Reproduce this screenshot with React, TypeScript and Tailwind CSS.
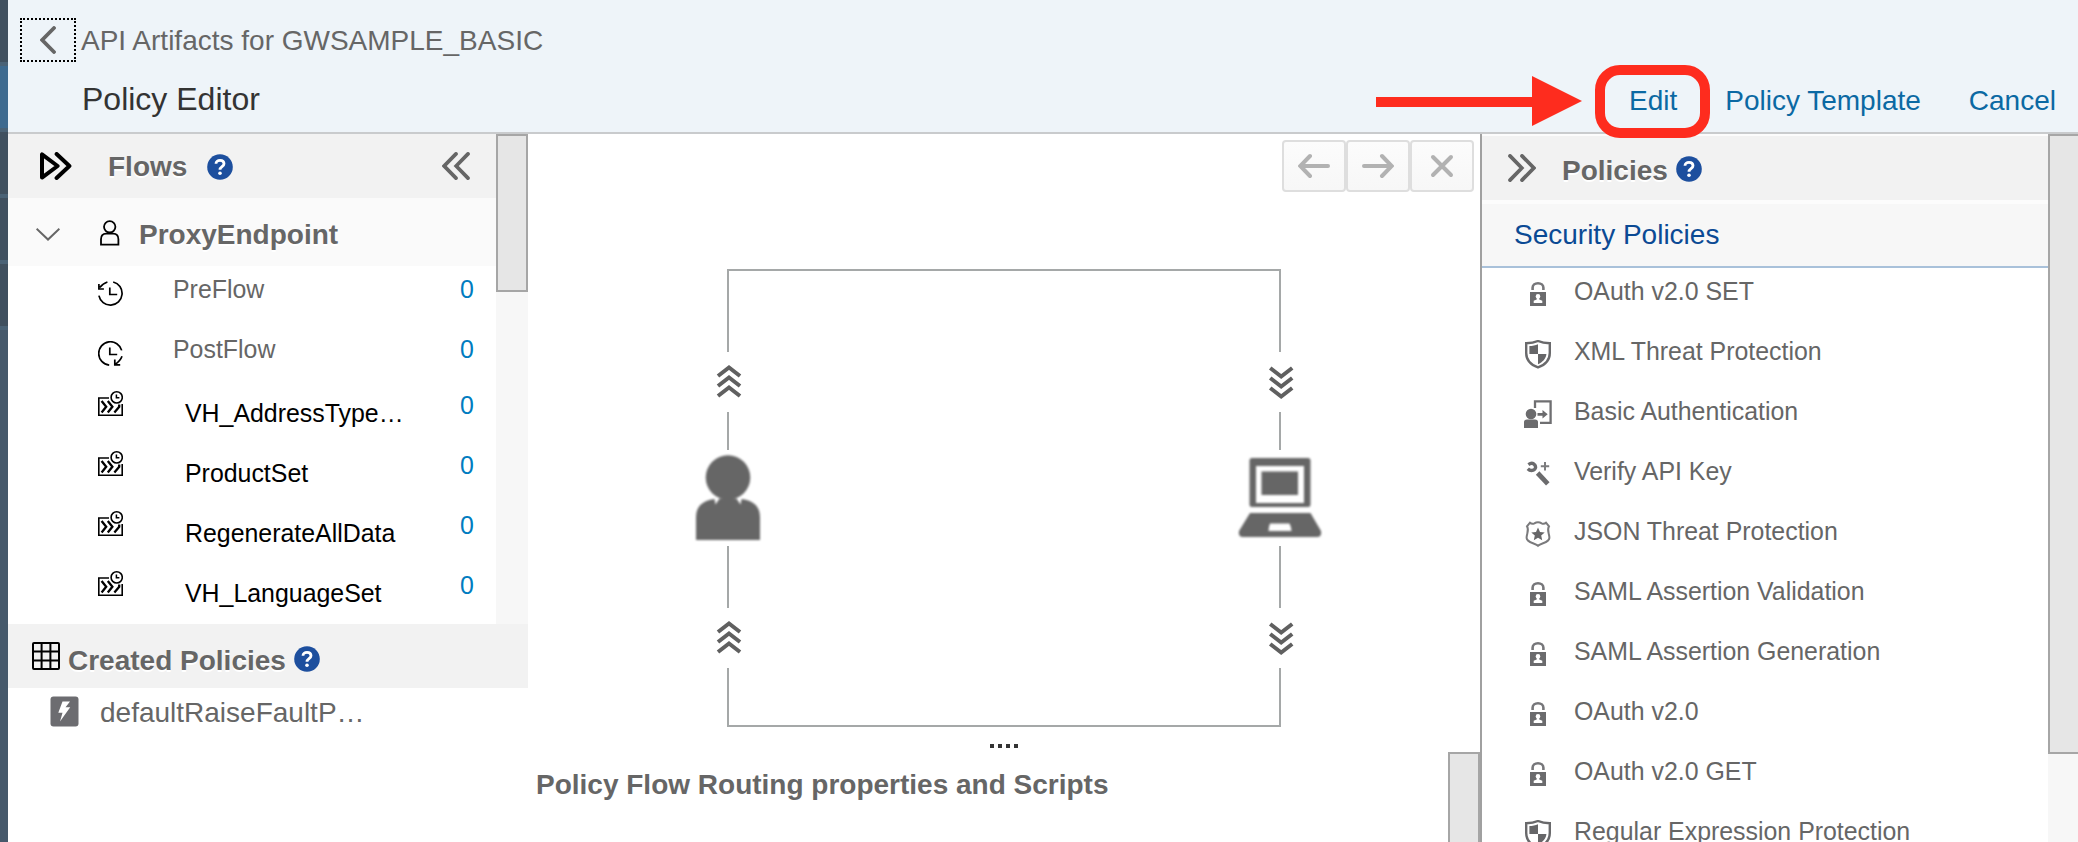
import type { ReactNode } from "react";

function HelpIcon() {
  return (
    <svg width="26" height="26" viewBox="0 0 26 26" fill="none" className="shrink-0">
      <circle cx="13" cy="13" r="12.8" fill="#1d4f9e" />
      <path d="M9 9.8C9 7.6 10.700 6.400 13 6.400s4 1.200 4 3.300c0 2.900-4 3-4 6" stroke="#fff" strokeWidth="2.800" />
      <circle cx="13" cy="19.300" r="1.800" fill="#fff" />
    </svg>
  );
}

function DoubleChevron({ left = false }: { left?: boolean }) {
  return (
    <svg width="28" height="28" viewBox="0 0 28 28" fill="none" stroke="#666" strokeWidth="3.700" strokeLinecap="round" className="shrink-0">
      {left ? (
        <path d="M14 1.900 2.200 14 14 26.100M26 1.900 14.200 14 26 26.100" />
      ) : (
        <path d="M2 1.900 13.800 14 2 26.100M14 1.900 25.800 14 14 26.100" />
      )}
    </svg>
  );
}

function PreFlowIcon() {
  return (
    <svg width="25" height="25" viewBox="0 0 25 25" fill="none" stroke="#000" strokeWidth="1.700">
      <path d="M15.200 1A11.700 11.700 0 1 1 .9 14.600" />
      <path d="M9.400 1Q5 2.300 1.800 6.600M.9 3v5h5M11.800 6.600v6.900h7.400" />
    </svg>
  );
}

function PostFlowIcon() {
  return (
    <svg width="25" height="25" viewBox="0 0 25 25" fill="none" stroke="#000" strokeWidth="1.700">
      <path d="M11.200 24.100A11.700 11.700 0 1 1 23.700 9.400" />
      <path d="M24 15.200q-1.600 4.600-6.800 8M16.800 18.600v5.200h5.400M11.800 6.600v6.900h7.400" />
    </svg>
  );
}

function ConditionalFlowIcon() {
  return (
    <svg width="25" height="25" viewBox="0 0 25 25" fill="none" stroke="#000" strokeWidth="1.600">
      <path d="M11 7H.8v17.200h23.400V13" />
      <circle cx="18.700" cy="6.400" r="5.600" />
      <path d="M18.400 3.400v3.400h3" strokeWidth="1.500" />
      <path d="m3.600 10 4.600 5.800-4.600 5.600M9.800 10l4.600 5.800-4.600 5.600M21.200 13.600v2.200l-4.800 5.600" strokeWidth="2.300" />
    </svg>
  );
}

const FILL = "#6b6b6d";

function LockIcon() {
  return (
    <svg width="28" height="30" viewBox="0 0 28 30" className="blur-[0.5px]">
      <path d="M8.600 10V7.800C8.600 5 10.800 3.200 14 3.200s5.400 1.800 5.400 4.600V10" fill="none" stroke="#77777a" strokeWidth="2.600" />
      <path d="M6 12h16v14H6z" fill={FILL} />
      <circle cx="14" cy="16.400" r="2.300" fill="#fff" />
      <path d="M13 18h2l.3 1.500 3 1.300V23H9.700v-2.200l3-1.300z" fill="#fff" />
    </svg>
  );
}

function ShieldIcon() {
  return (
    <svg width="28" height="30" viewBox="0 0 28 30" className="blur-[0.5px]">
      <path d="M14 1C10.500 2.600 6 3.200 2.200 3.200V13c0 7 5 12 11.800 14.400C20.800 25 25.800 20 25.800 13V3.200C22 3.200 17.500 2.600 14 1z" fill="#fff" stroke="#69696b" strokeWidth="2.400" />
      <path d="M14 4.200c-2.600 1.200-5.500 1.700-8.600 1.800V14H14zM14 14v10.200c4.600-2 8-5.400 8.400-10.200z" fill="#666668" />
    </svg>
  );
}

function BasicAuthIcon() {
  return (
    <svg width="28" height="30" viewBox="0 0 28 30" className="blur-[0.5px]">
      <path d="M11 8V1.300h15.600v21.500H16" fill="none" stroke="#6f6f71" strokeWidth="2.300" />
      <circle cx="7" cy="14" r="5.300" fill={FILL} />
      <path d="M0 28v-6q0-2.500 3-2.500h8q3 0 3 2.500v6z" fill={FILL} />
      <path d="M13.500 12.900h5V10l5.200 4.300-5.200 4.300v-2.900h-5z" fill={FILL} />
    </svg>
  );
}

function VerifyKeyIcon() {
  return (
    <svg width="28" height="30" viewBox="0 0 28 30" fill="none" className="blur-[0.5px]">
      <path d="M4.400 4.600q3.800-2.600 6.300.2 2.300 3.400-1.500 5.400-3 1-5.400-1.400" stroke={FILL} strokeWidth="3.400" />
      <path d="m13.600 13 10.200 10.800" stroke={FILL} strokeWidth="4.800" />
      <path d="M21 2v8.400M16.800 6.200h8.400" stroke="#7c7c7e" strokeWidth="2" />
    </svg>
  );
}

function BadgeIcon() {
  return (
    <svg width="28" height="30" viewBox="0 0 28 30" className="blur-[0.5px]">
      <path d="M6 2.700q2 1.800 4.400.6 1.600-1 3.600-1t3.600 1q2.400 1.200 4.400-.6l3 3.600c-2.600 4 .6 7.400.4 11.600-.2 5-8 4.900-11.400 7.900-3.400-3-11.200-2.900-11.400-7.900C2.400 13.700 5.600 10.300 3 6.300z" fill="none" stroke="#7a7a7c" strokeWidth="2" />
      <path d="m14 7.600 2 4.300 4.700.5-3.500 3.200 1 4.700-4.200-2.500-4.200 2.500 1-4.700-3.500-3.200 4.700-.5z" fill="#666668" />
    </svg>
  );
}

const navSegments = [
  "h-[62px] bg-[#40505f]",
  "h-1 bg-[#4a6276]",
  "h-[62px] bg-[#3e6a8f]",
  "h-1 bg-[#4a6276]",
  "h-[62px] bg-[#40505f]",
  "h-1 bg-[#4a6276]",
  "h-[62px] bg-[#40505f]",
  "h-1 bg-[#4a6276]",
  "h-[62px] bg-[#40505f]",
  "h-1 bg-[#4a6276]",
  "flex-1 bg-[#46596b]",
];

function Header() {
  return (
    <header className="flex h-[134px] shrink-0 flex-col border-b-2 border-[#c9cbcd] bg-[#eef4f9] pt-[18px]">
      <div className="flex h-11 items-center pl-3">
        <button className="flex h-11 w-14 items-center justify-center border-2 border-dotted border-black">
          <svg width="16" height="28" viewBox="0 0 16 28" fill="none" stroke="#666" strokeWidth="3.800" strokeLinecap="round">
            <path d="M14 2 2.200 14 14 26" />
          </svg>
        </button>
        <span className="mt-px ml-[5px] text-[28px] leading-8 text-[#666]">API Artifacts for GWSAMPLE_BASIC</span>
      </div>
      <div className="mt-[19px] flex items-start pr-[22px] pl-[74px]">
        <h1 className="text-[32px] leading-9 text-[#333]">Policy Editor</h1>
        <div className="mt-1 ml-auto flex text-[28px] leading-8 text-[#0b69a3]">
          <a className="mr-12">Edit</a>
          <a className="mr-12">Policy Template</a>
          <a>Cancel</a>
        </div>
      </div>
    </header>
  );
}

function FlowRow({ icon, name, plain = false }: { icon: ReactNode; name: string; plain?: boolean }) {
  return (
    <li className="flex h-[60px] shrink-0 items-start pl-[90px] text-[24.900px] leading-7">
      <span className={plain ? "mt-[15px] w-[25px]" : "mt-[5px] w-[25px]"}>{icon}</span>
      <span className={plain ? "mt-[9px] ml-[50px] w-[287px] text-[#666]" : "mt-[13px] ml-[62px] w-[275px] text-black"}>{name}</span>
      <span className={plain ? "mt-[9px] text-[#007cc0]" : "mt-[5px] text-[#007cc0]"}>0</span>
    </li>
  );
}

function FlowsPanel() {
  return (
    <aside className="flex w-[520px] shrink-0 flex-col">
      <div className="flex h-[490px]">
        <div className="flex w-[488px] flex-col overflow-hidden">
          <div className="flex h-16 shrink-0 items-center bg-[#f2f2f2] pr-[26px] pl-8">
            <svg width="32" height="28" viewBox="0 0 32 28" fill="none" stroke="#000" strokeWidth="4" strokeLinejoin="round" strokeLinecap="round">
              <path d="M2 2.400v23.200L17.600 14zM16.600 2 29.400 14 16.600 26" />
            </svg>
            <h2 className="mt-0.5 ml-9 text-[28px] leading-8 font-bold text-[#666] [text-shadow:0_2px_0_white]">Flows</h2>
            <span className="mt-px ml-5">
              <HelpIcon />
            </span>
            <span className="ml-auto">
              <DoubleChevron left />
            </span>
          </div>
          <div className="flex h-[68px] shrink-0 items-center bg-[#fafafa] pl-7">
            <svg width="24" height="13" viewBox="0 0 24 13" fill="none" stroke="#666" strokeWidth="2" className="mt-[5px]">
              <path d="M.6.8 12 11.600 23.400.8" />
            </svg>
            <svg width="20" height="26" viewBox="0 0 20 26" fill="none" stroke="#000" strokeWidth="1.800" className="mt-0.5 ml-10">
              <circle cx="9.700" cy="6.800" r="5.700" />
              <path d="M1 24.600v-5.400q0-5.600 5.200-5.600h7q5.200 0 5.200 5.600v5.400z" />
            </svg>
            <h3 className="mt-1.5 ml-[19px] text-[28px] leading-8 font-bold text-[#666] [text-shadow:0_2px_0_white]">ProxyEndpoint</h3>
          </div>
          <ul className="flex flex-col">
            <FlowRow icon={<PreFlowIcon />} name="PreFlow" plain />
            <FlowRow icon={<PostFlowIcon />} name="PostFlow" plain />
            <FlowRow icon={<ConditionalFlowIcon />} name="VH_AddressType…" />
            <FlowRow icon={<ConditionalFlowIcon />} name="ProductSet" />
            <FlowRow icon={<ConditionalFlowIcon />} name="RegenerateAllData" />
            <FlowRow icon={<ConditionalFlowIcon />} name="VH_LanguageSet" />
          </ul>
        </div>
        <div className="w-8 bg-[#f7f7f7]">
          <div className="h-[158px] border-2 border-[#a6a6a6] bg-[#e6e6e6]" />
        </div>
      </div>
      <div className="flex h-16 items-center bg-[#f2f2f2] pl-6">
        <svg width="28" height="28" viewBox="0 0 28 28" fill="none" stroke="#000" strokeWidth="2">
          <rect x="1" y="1" width="26" height="26" rx="1" />
          <path d="M9.600 1v26M18.400 1v26M1 9.600h26M1 18.400h26" />
        </svg>
        <h2 className="mt-[9px] ml-2 text-[28px] leading-8 font-bold text-[#666] [text-shadow:0_2px_0_white]">Created Policies</h2>
        <span className="mt-[5px] ml-2">
          <HelpIcon />
        </span>
      </div>
      <div className="flex items-start pt-2 pl-[42px]">
        <svg width="29" height="31" viewBox="0 0 29 31" className="blur-[0.6px]">
          <rect x=".5" y=".5" width="28" height="30" rx="3" fill="#6c6c70" />
          <path d="M12.500 5.500H20l-4.500 5.800h4.700L10 25.500l2.500-8.700H8.300z" fill="#fff" />
        </svg>
        <span className="mt-px ml-[21px] text-[28px] leading-8 text-[#666]">defaultRaiseFaultP…</span>
      </div>
    </aside>
  );
}

function ToolButton({ d }: { d: string }) {
  return (
    <button className="flex h-[52px] w-16 items-center justify-center rounded border-2 border-[#dedede] bg-linear-to-b from-[#fcfcfc] to-[#f7f7f7]">
      <svg width="32" height="26" viewBox="0 0 32 26" fill="none" stroke="#b2b2b2" strokeWidth="4" strokeLinecap="round">
        <path d={d} />
      </svg>
    </button>
  );
}

const UP = "M718 376 729 367.500l11 8.500M718 386 729 377.500l11 8.500M718 396 729 387.500l11 8.500";
const DOWN = "M1270.200 368 1281.200 376.500l11-8.500M1270.200 378 1281.200 386.500l11-8.500M1270.200 388 1281.200 396.500l11-8.500";

function FlowDiagram() {
  return (
    <svg width="952" height="490" viewBox="528 260 952 490" fill="none" className="block">
      <g stroke="#a5a8a8" strokeWidth="2">
        <path d="M728 352v-82h552v82M728 412v38M1280 412v38M728 546v62M1280 546v62M728 668v58h552v-58" />
      </g>
      <g stroke="#606060" strokeWidth="4" className="blur-[0.5px]">
        <path d={UP} />
        <path d={UP} transform="translate(0 256)" />
        <path d={DOWN} />
        <path d={DOWN} transform="translate(0 256)" />
      </g>
      <g fill="#666" className="blur-[0.9px]">
        <circle cx="728" cy="477.500" r="22.300" />
        <path d="M696 540v-23q0-15.500 18.500-18l1 5.500 4-6h17l4 6 1-5.500q18.500 2.500 18.500 18v23z" />
        <path fillRule="evenodd" d="M1252 458h56q2.500 0 2.500 2.500v44q0 2.500-2.500 2.500h-56q-2.500 0-2.500-2.500v-44q0-2.500 2.500-2.500zM1256 466v37h48v-37z" />
        <path d="M1261.500 471.500h36.500V495h-36.500z" />
        <path fillRule="evenodd" d="M1250 513h60.500l10.500 18q1 6-4 6h-74q-5 0-4-6zM1270 523.500q-1.500 4-1.500 7.500h23q0-3.500-2-7.500z" />
      </g>
      <path d="M990 744h4v4h-4zM998 744h4v4h-4zM1006 744h4v4h-4zM1014 744h4v4h-4z" fill="#333" />
    </svg>
  );
}

function Canvas() {
  return (
    <main className="relative flex w-[952px] shrink-0 flex-col bg-white">
      <div className="flex h-[126px] shrink-0 items-start justify-end pt-1.5 pr-[6px]">
        <ToolButton d="M30 13H3M12 3 2.200 13 12 23" />
        <ToolButton d="M2 13h27M20 3l9.800 10L20 23" />
        <ToolButton d="M7 4l18 18M25 4 7 22" />
      </div>
      <FlowDiagram />
      <div className="flex min-h-0 flex-1 justify-between">
        <h2 className="mt-[19px] ml-2 text-[28px] leading-8 font-bold text-[#666]">Policy Flow Routing properties and Scripts</h2>
        <div className="mt-0.5 w-8 border-2 border-b-0 border-[#a6a6a6] bg-[#e6e6e6]" />
      </div>
    </main>
  );
}

const policies: { name: string; icon: ReactNode }[] = [
  { name: "OAuth v2.0 SET", icon: <LockIcon /> },
  { name: "XML Threat Protection", icon: <ShieldIcon /> },
  { name: "Basic Authentication", icon: <BasicAuthIcon /> },
  { name: "Verify API Key", icon: <VerifyKeyIcon /> },
  { name: "JSON Threat Protection", icon: <BadgeIcon /> },
  { name: "SAML Assertion Validation", icon: <LockIcon /> },
  { name: "SAML Assertion Generation", icon: <LockIcon /> },
  { name: "OAuth v2.0", icon: <LockIcon /> },
  { name: "OAuth v2.0 GET", icon: <LockIcon /> },
  { name: "Regular Expression Protection", icon: <ShieldIcon /> },
];

function PoliciesPanel() {
  return (
    <aside className="flex min-w-0 flex-1">
      <div className="flex w-[568px] shrink-0 flex-col overflow-hidden border-l-2 border-[#a0a0a0] bg-white">
        <div className="flex h-[70px] shrink-0 items-center border-t-2 border-b-4 border-[#fcfcfc] bg-[#f2f2f2] pl-[26px]">
          <DoubleChevron />
          <h2 className="mt-[5px] ml-[26px] text-[28px] leading-8 font-bold text-[#666] [text-shadow:0_2px_0_white]">Policies</h2>
          <span className="mt-px ml-2">
            <HelpIcon />
          </span>
        </div>
        <h3 className="h-16 shrink-0 border-b-2 border-[#a9c1da] bg-[#f7f7f7] pt-[15px] pl-8 text-[28px] leading-8 text-[#0b4a94]">Security Policies</h3>
        <ul className="flex flex-col">
          {policies.map((policy) => (
            <li key={policy.name} className="flex h-[60px] shrink-0 items-start pl-[42px] text-[24.900px] leading-7 text-[#666]">
              <span className="mt-3 w-7">{policy.icon}</span>
              <span className="mt-[9px] ml-[22px]">{policy.name}</span>
            </li>
          ))}
        </ul>
      </div>
      <div className="min-w-0 flex-1 bg-[#f7f7f7]">
        <div className="h-[620px] border-2 border-r-0 border-[#a6a6a6] bg-[#e6e6e6]" />
      </div>
    </aside>
  );
}

function EditCallout() {
  return (
    <div className="pointer-events-none absolute top-[65px] left-[1376px] flex items-start">
      <svg width="206" height="73" viewBox="0 0 206 73" fill="#fe2c1e">
        <path d="M0 32h156V11l50 25-50 25V42H0z" />
      </svg>
      <div className="ml-[13px] h-[73px] w-[115px] rounded-[25px] border-10 border-[#fe2c1e]" />
    </div>
  );
}

export default function App() {
  return (
    <div className="relative flex h-[842px] w-[2078px] overflow-hidden bg-white font-['Liberation_Sans',Arial,sans-serif]">
      <nav className="flex w-2 shrink-0 flex-col">
        {navSegments.map((segment, i) => (
          <div key={i} className={segment} />
        ))}
      </nav>
      <div className="flex min-w-0 flex-1 flex-col">
        <Header />
        <div className="flex min-h-0 flex-1">
          <FlowsPanel />
          <Canvas />
          <PoliciesPanel />
        </div>
      </div>
      <EditCallout />
    </div>
  );
}
